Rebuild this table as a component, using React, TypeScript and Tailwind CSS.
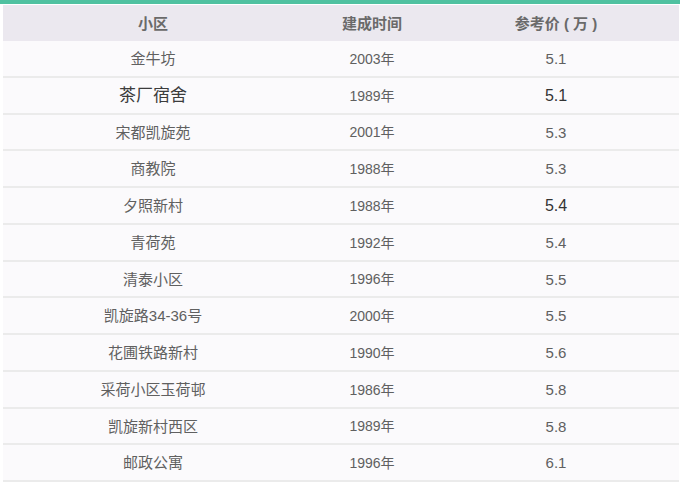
import React from 'react';

interface Row {
    name: string;
    year: string;
    price: string;
    strong?: boolean;
    strongPrice?: boolean;
}

const rows: Row[] = [
    { name: '金牛坊', year: '2003年', price: '5.1' },
    { name: '茶厂宿舍', year: '1989年', price: '5.1', strong: true, strongPrice: true },
    { name: '宋都凯旋苑', year: '2001年', price: '5.3' },
    { name: '商教院', year: '1988年', price: '5.3' },
    { name: '夕照新村', year: '1988年', price: '5.4', strongPrice: true },
    { name: '青荷苑', year: '1992年', price: '5.4' },
    { name: '清泰小区', year: '1996年', price: '5.5' },
    { name: '凯旋路34-36号', year: '2000年', price: '5.5' },
    { name: '花圃铁路新村', year: '1990年', price: '5.6' },
    { name: '采荷小区玉荷邨', year: '1986年', price: '5.8' },
    { name: '凯旋新村西区', year: '1989年', price: '5.8' },
    { name: '邮政公寓', year: '1996年', price: '6.1' },
];

const App: React.FC = () => {
    return (
        <div className="w-[683px] h-[489px] bg-white overflow-hidden font-['Liberation_Sans','Noto_Sans_CJK_SC',sans-serif]">
            {/* Top accent */}
            <div className="h-[4px] w-[680px] bg-[#4fc1a0]"></div>

            <div className="ml-[3px] w-[676px] mt-[1px]">
                {/* Header */}
                <div className="flex h-[36px] items-center pt-[2px] bg-[#ebe8ef] text-[15px] text-[#6a6a6a] font-semibold">
                    <div className="w-[300px] text-center">小区</div>
                    <div className="w-[138px] text-center">建成时间</div>
                    <div className="flex-1 text-center pr-[8px]">参考价 ( 万 )</div>
                </div>

                {/* Body */}
                {rows.map((r, i) => (
                    <div
                        key={i}
                        className="flex h-[36.75px] items-center pt-[2px] bg-[#fbfafc] border-b-2 border-[#ebebeb] text-[#606060]"
                    >
                        <div className={`w-[300px] text-center ${r.strong ? 'text-[17px] text-[#3c3c3c]' : 'text-[15px]'}`}>
                            {r.name}
                        </div>
                        <div className="w-[138px] text-center text-[14px]">{r.year}</div>
                        <div className={`flex-1 text-center pr-[8px] ${r.strongPrice ? 'text-[16px] text-[#333]' : 'text-[15px]'}`}>
                            {r.price}
                        </div>
                    </div>
                ))}
            </div>
        </div>
    );
};

export default App;
